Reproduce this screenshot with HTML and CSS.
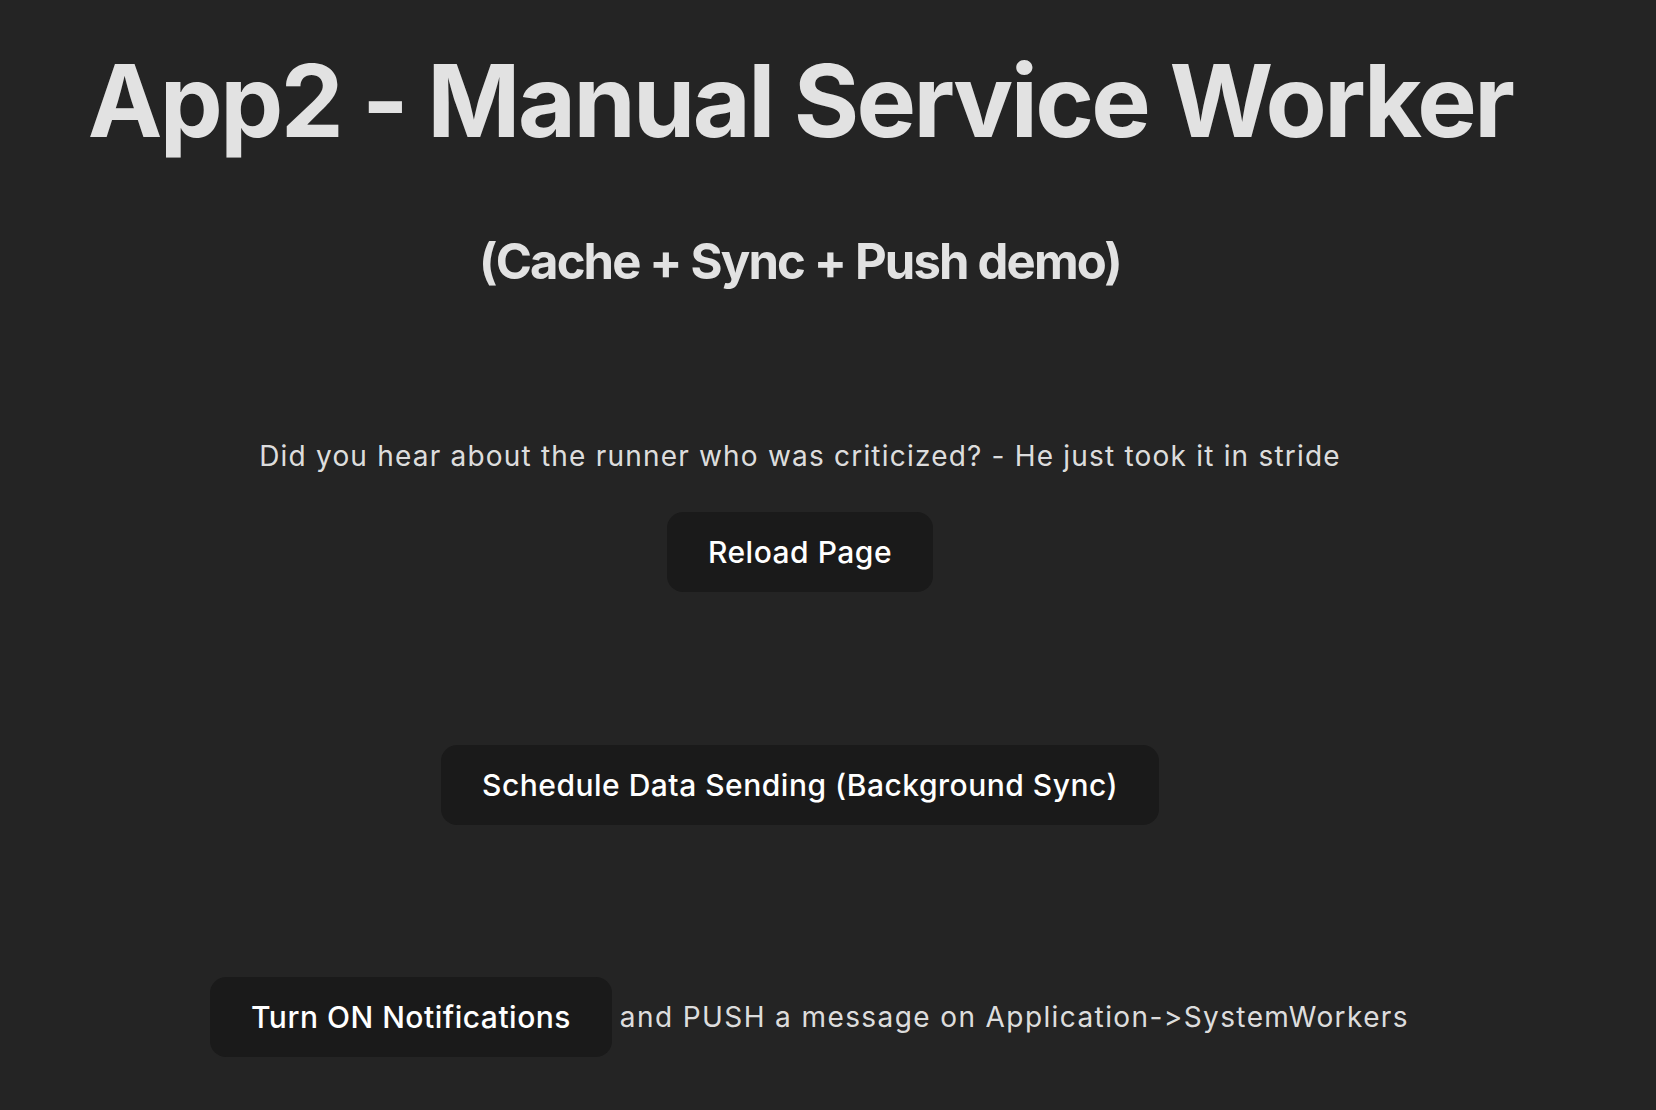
FILE: index.html
```html
<!DOCTYPE html>
<html lang="en">
<head>
<meta charset="utf-8">
<title>App2 - Manual Service Worker</title>
<link rel="stylesheet" href="styles.css">
</head>
<body>
<main class="app">
  <h1 class="title">App2 - Manual Service Worker</h1>
  <h2 class="subtitle">(Cache + Sync + Push demo)</h2>
  <section class="joke">
    <p class="joke-text">Did you hear about the runner who was criticized? - He just took it in stride</p>
    <button class="btn" type="button">Reload Page</button>
  </section>
  <section class="sync">
    <button class="btn" type="button">Schedule Data Sending (Background Sync)</button>
  </section>
  <section class="push">
    <button class="btn" type="button">Turn ON Notifications</button> <span class="push-text">and PUSH a message on Application-&gt;SystemWorkers</span>
  </section>
</main>
</body>
</html>
```
FILE: styles.css
```css
html, body {
  margin: 0;
  padding: 0;
  background: #242424;
}

body {
  font-family: Inter, "Noto Sans", "Liberation Sans", sans-serif;
  font-variant-ligatures: no-contextual;
  font-feature-settings: "calt" 0;
  color: rgba(255, 255, 255, 0.87);
  min-height: 100vh;
  overflow: hidden;
}

.app {
  width: 1600px;
  text-align: center;
  padding-top: 46px;
}

.title {
  margin: 0;
  font-size: 100px;
  line-height: 110px;
  font-weight: 700;
  letter-spacing: -2.6px;
}

.subtitle {
  margin: 75px 0 0;
  font-size: 49px;
  line-height: 62px;
  font-weight: 700;
  letter-spacing: -1.85px;
}

.joke {
  margin-top: 143px;
}

.joke-text {
  margin: 0 0 36px;
  font-size: 28px;
  line-height: 40px;
  letter-spacing: 1.2px;
}

.btn {
  font-family: inherit;
  font-feature-settings: "calt" 0;
  font-size: 30px;
  line-height: 44px;
  font-weight: 500;
  letter-spacing: 0.5px;
  color: #ffffff;
  background: #1a1a1a;
  border: 1px solid transparent;
  border-radius: 16px;
  padding: 17px 40px;
  margin: 0;
  cursor: pointer;
  vertical-align: middle;
}

.sync {
  margin-top: 153px;
}

.push {
  margin-top: 152px;
  padding-left: 19px;
  font-size: 28px;
}

.push-text {
  vertical-align: middle;
  letter-spacing: 1.4px;
}
```
